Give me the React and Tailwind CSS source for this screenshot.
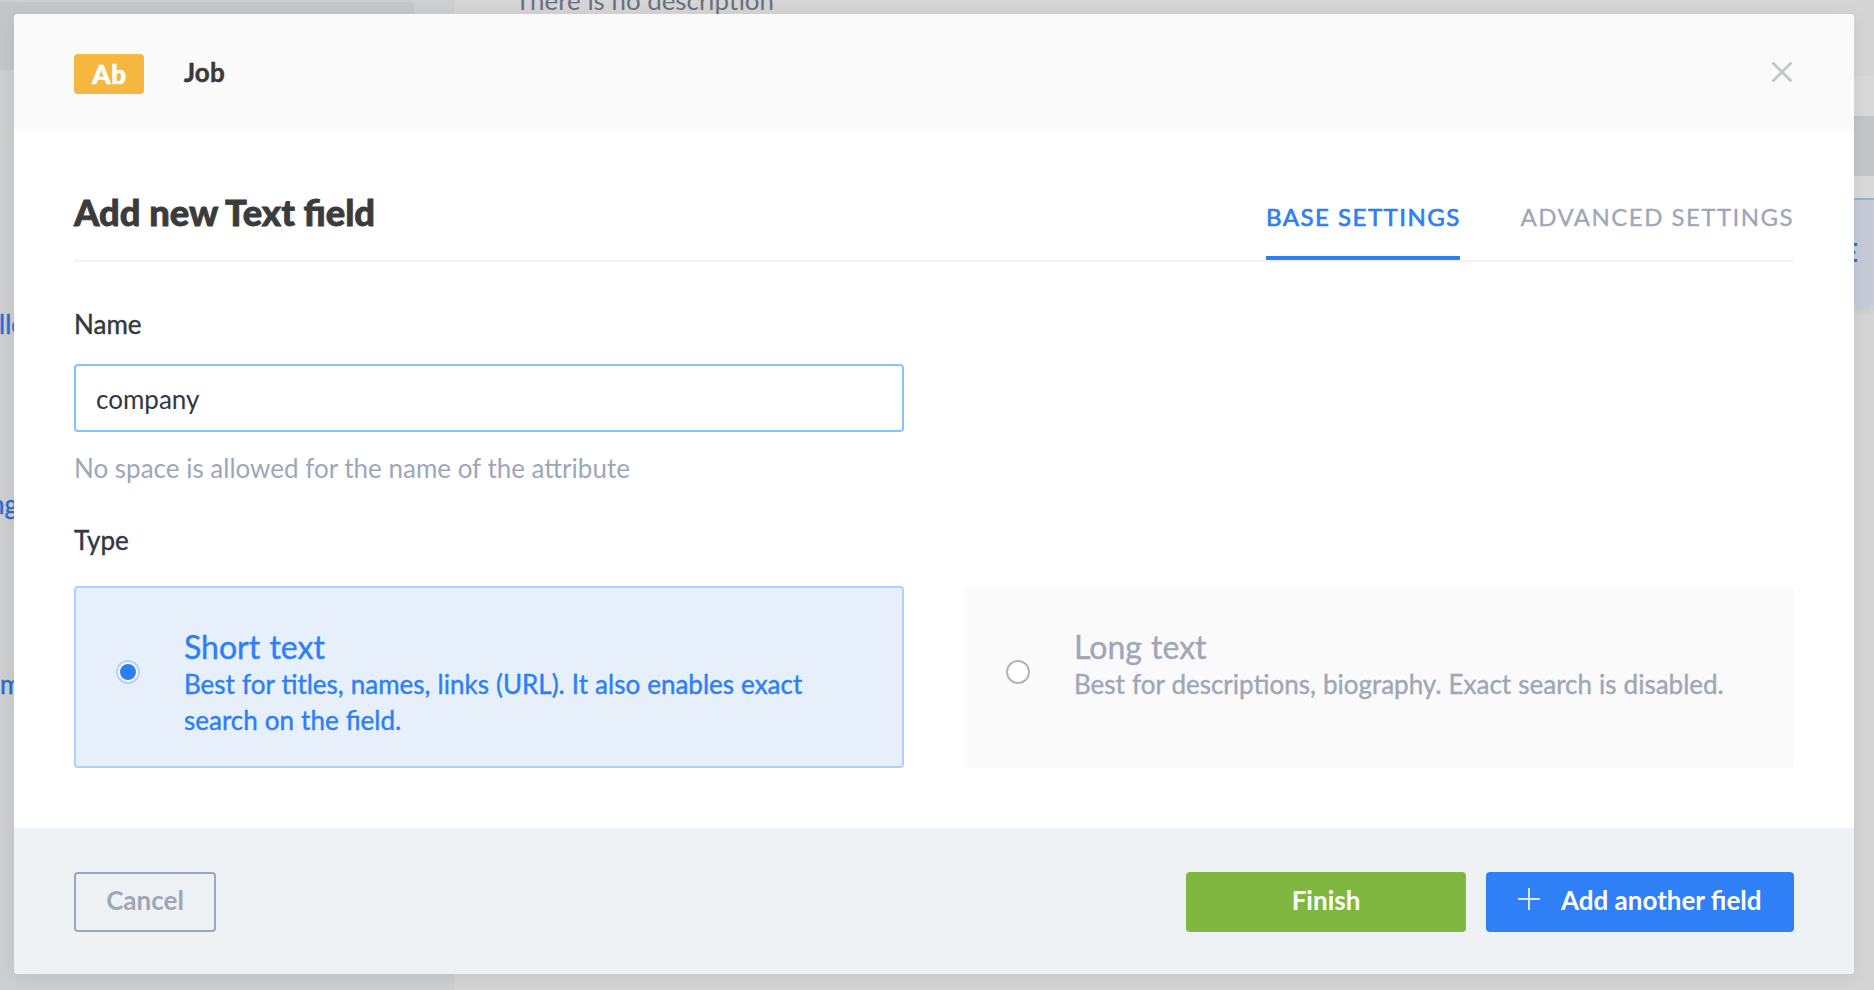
import React from 'react';

function Backdrop() {
  return (
    <div className="flex h-[990px] w-[1874px] overflow-hidden">
      <aside className="w-[454px] shrink-0 bg-[#cecfd1] pt-[2px] text-[26px] leading-[36px] text-[#2a6dd4] [-webkit-text-stroke:0.4px]">
        <div className="h-[68px] w-[414px] rounded-r-[4px] bg-[#c5c6c8]" />
        <div className="mt-[236px] -ml-[1px] w-[60px] whitespace-nowrap">lle</div>
        <div className="mt-[144px] -ml-[10px] w-[60px] whitespace-nowrap">ng</div>
        <div className="mt-[144px] w-[60px] whitespace-nowrap">m</div>
      </aside>
      <div className="flex grow justify-between bg-[#d5d5d5]">
        <p className="-mt-[18px] ml-[61px] h-[36px] text-[25.9px] leading-[36px] whitespace-nowrap text-[#6b7080]">There is no description</p>
        <div className="w-[60px] pt-[76px]">
          <div className="h-[40px] bg-[#d9d9d9]" />
          <div className="h-[60px] bg-[#c4c5c7]" />
          <div className="h-[22px] bg-[#d9d9d9]" />
          <div className="h-[108px] border-t-2 border-[#93b1d5] bg-[#c5ccd7] pt-[34px] pl-[29px] text-[26px] leading-[36px] font-bold text-[#2a6dd4] shadow-[0_4px_8px_rgba(0,0,0,0.06)]">E</div>
        </div>
      </div>
    </div>
  );
}

function Choice({ title, text, selected }) {
  return (
    <div
      className={
        'flex h-[182px] w-[830px] rounded-[4px] border-2 pt-[40px] pr-[60px] ' +
        (selected ? 'border-[#afd1f9] bg-[#e7f0fa] text-[#2d7ef7]' : 'border-[#fafafa] bg-[#fafafa] text-[#9ea7b8]')
      }
    >
      <span
        className={
          'mt-[32px] ml-[40px] flex size-[24px] shrink-0 items-center justify-center rounded-full border-2 bg-white ' +
          (selected ? 'border-[#b3d4fb]' : 'border-[#b3b5b9]')
        }
      >
        {selected && <span className="size-[16px] rounded-full bg-[#2d7ef7]" />}
      </span>
      <div className="ml-[44px] [-webkit-text-stroke:0.4px]">
        <div className="text-[32px] leading-[38px] [word-spacing:1px]">{title}</div>
        <div className="text-[26px] leading-[36px] [word-spacing:0.4px]">{text}</div>
      </div>
    </div>
  );
}

export default function App() {
  return (
    <div className="relative h-[990px] w-[1874px] overflow-hidden font-['Lato',sans-serif]">
      <Backdrop />
      <div className="absolute top-[14px] left-[14px] flex h-[960px] w-[1840px] flex-col overflow-hidden rounded-[4px] bg-white shadow-[0_4px_20px_rgba(0,0,0,0.08)]">
        <header className="flex h-[118px] items-start bg-[#fafafa] px-[60px]">
          <span className="mt-[40px] flex h-[40px] w-[70px] items-center justify-center rounded-[4px] bg-[#f6b740] pl-[1px] text-[26px] leading-[40px] font-black tracking-[0.8px] text-white [-webkit-text-stroke:0.6px]">Ab</span>
          <span className="mt-[40px] ml-[40px] text-[26px] leading-[36px] font-bold tracking-[0.1px] text-[#3b3b3b] [-webkit-text-stroke:0.5px]">Job</span>
          <svg className="mt-[48px] ml-auto mr-[1px]" width="22" height="20" viewBox="0 0 22 20" fill="none" stroke="#c3c5c8" strokeWidth="2.8">
            <path d="M1.5 0.5 20.5 19.5M20.5 0.5 1.5 19.5" />
          </svg>
        </header>
        <main className="flex h-[696px] flex-col px-[60px]">
          <div className="flex h-[130px] justify-between border-b-2 border-[#f1f2f6]">
            <h1 className="mt-[57px] text-[36.3px] leading-[46px] font-black text-[#3b3b3b] [-webkit-text-stroke:0.8px]">Add new Text field</h1>
            <nav className="flex gap-[60px] pt-[67px] text-[24px] leading-[36px]">
              <span className="h-[61px] w-[194px] border-b-4 border-[#2d7ef7] tracking-[1.5px] whitespace-nowrap text-[#2d7ef7] [-webkit-text-stroke:0.7px]">BASE SETTINGS</span>
              <span className="w-[274px] pl-[0.5px] tracking-[1.46px] whitespace-nowrap text-[#9ea7b8] [-webkit-text-stroke:0.3px]">ADVANCED SETTINGS</span>
            </nav>
          </div>
          <label className="mt-[43px] text-[26px] leading-[38px] text-[#333740] [-webkit-text-stroke:0.4px]">Name</label>
          <div className="mt-[21px] flex h-[68px] w-[830px] items-center rounded-[4px] border-2 border-[#84c4fb] px-[20px] pt-[1px] text-[26px] leading-[36px] text-[#333740]">company</div>
          <p className="mt-[18px] text-[26px] leading-[36px] text-[#9ea7b8]">No space is allowed for the name of the attribute</p>
          <label className="mt-[35px] text-[26px] leading-[38px] text-[#333740] [-webkit-text-stroke:0.4px]">Type</label>
          <div className="mt-[27px] flex justify-between">
            <Choice selected title="Short text" text="Best for titles, names, links (URL). It also enables exact search on the field." />
            <Choice title="Long text" text="Best for descriptions, biography. Exact search is disabled." />
          </div>
        </main>
        <footer className="flex h-[146px] bg-[#eef2f5] px-[60px] pt-[44px] text-[26px] leading-[56px] font-bold">
          <button className="h-[60px] w-[142px] rounded-[4px] border-2 border-[#9ea7b8] pb-[4px] leading-[52px] text-[#9ea7b8]">Cancel</button>
          <button className="ml-auto h-[60px] w-[280px] rounded-[4px] bg-[#7fb740] pb-[4px] text-white">Finish</button>
          <button className="ml-[20px] flex h-[60px] w-[308px] items-start rounded-[4px] bg-[#2f80f7] pl-[32px] text-white">
            <svg className="mt-[16px] mr-[21px]" width="22" height="22" viewBox="0 0 22 22" fill="none" stroke="#d5e6fd" strokeWidth="2">
              <path d="M11 0v22M0 11h22" />
            </svg>
            <span>Add another field</span>
          </button>
        </footer>
      </div>
    </div>
  );
}
